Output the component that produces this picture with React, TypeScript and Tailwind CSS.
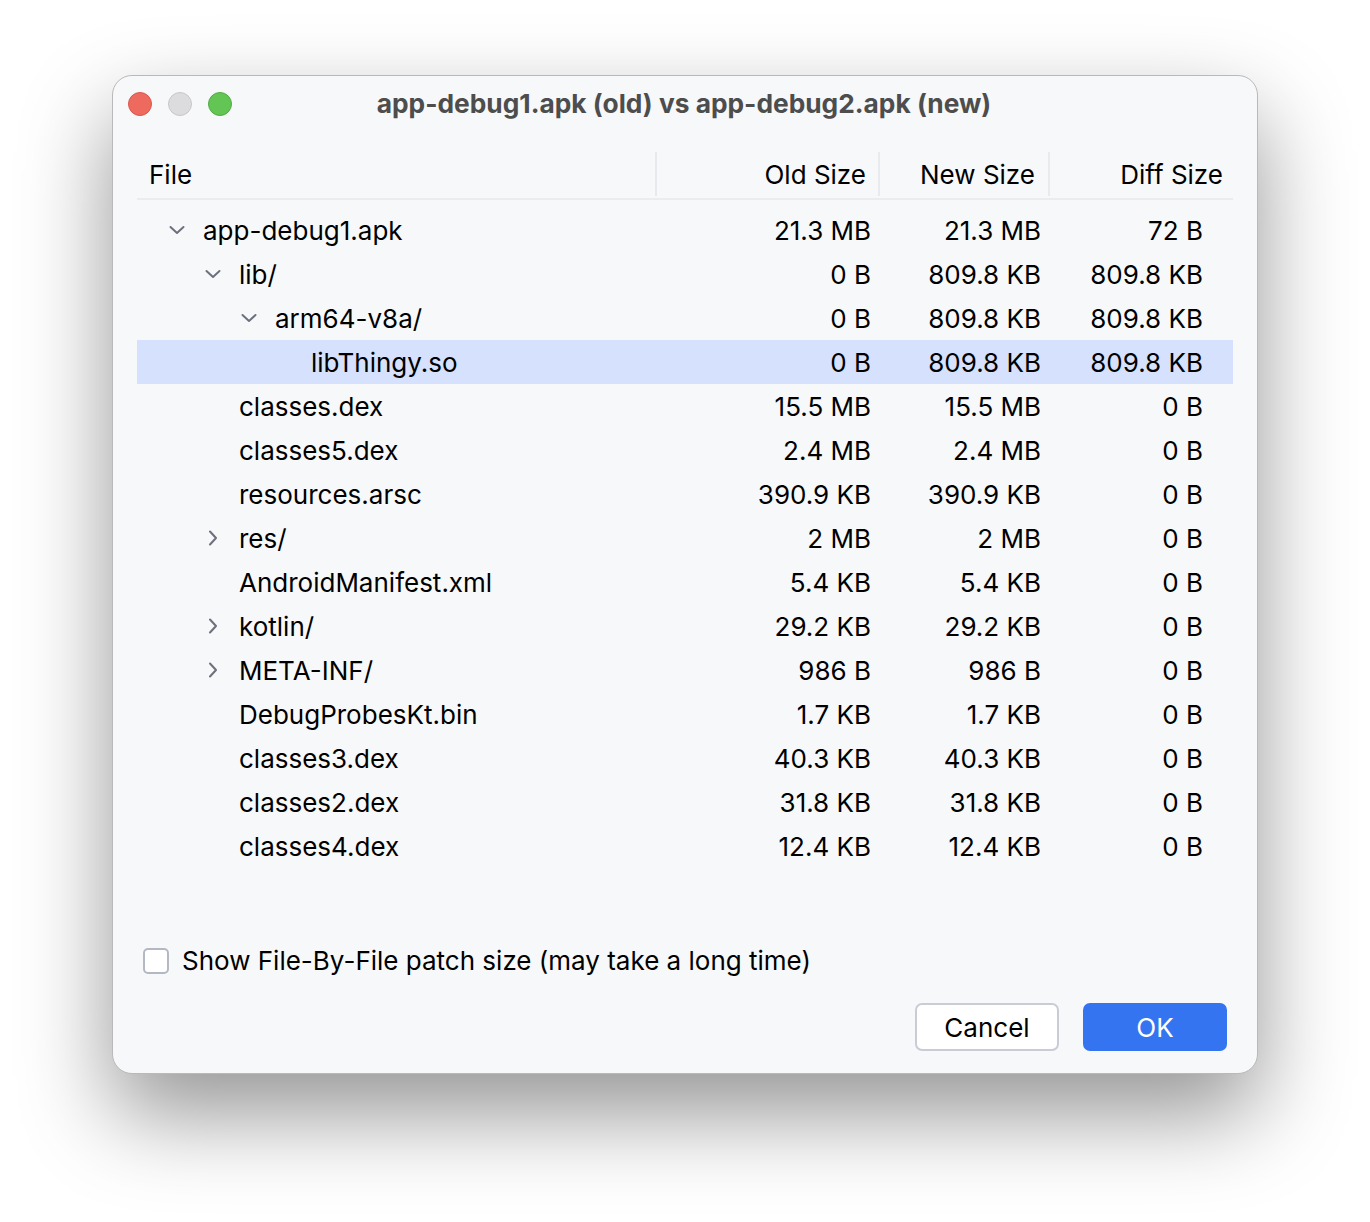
import { Fragment } from "react";

type Row = {
  name: string;
  level: number;
  chevron?: "down" | "right";
  oldSize: string;
  newSize: string;
  diffSize: string;
  selected?: boolean;
};

const rows: Row[] = [
  { name: "app-debug1.apk", level: 0, chevron: "down", oldSize: "21.3 MB", newSize: "21.3 MB", diffSize: "72 B" },
  { name: "lib/", level: 1, chevron: "down", oldSize: "0 B", newSize: "809.8 KB", diffSize: "809.8 KB" },
  { name: "arm64-v8a/", level: 2, chevron: "down", oldSize: "0 B", newSize: "809.8 KB", diffSize: "809.8 KB" },
  { name: "libThingy.so", level: 3, oldSize: "0 B", newSize: "809.8 KB", diffSize: "809.8 KB", selected: true },
  { name: "classes.dex", level: 1, oldSize: "15.5 MB", newSize: "15.5 MB", diffSize: "0 B" },
  { name: "classes5.dex", level: 1, oldSize: "2.4 MB", newSize: "2.4 MB", diffSize: "0 B" },
  { name: "resources.arsc", level: 1, oldSize: "390.9 KB", newSize: "390.9 KB", diffSize: "0 B" },
  { name: "res/", level: 1, chevron: "right", oldSize: "2 MB", newSize: "2 MB", diffSize: "0 B" },
  { name: "AndroidManifest.xml", level: 1, oldSize: "5.4 KB", newSize: "5.4 KB", diffSize: "0 B" },
  { name: "kotlin/", level: 1, chevron: "right", oldSize: "29.2 KB", newSize: "29.2 KB", diffSize: "0 B" },
  { name: "META-INF/", level: 1, chevron: "right", oldSize: "986 B", newSize: "986 B", diffSize: "0 B" },
  { name: "DebugProbesKt.bin", level: 1, oldSize: "1.7 KB", newSize: "1.7 KB", diffSize: "0 B" },
  { name: "classes3.dex", level: 1, oldSize: "40.3 KB", newSize: "40.3 KB", diffSize: "0 B" },
  { name: "classes2.dex", level: 1, oldSize: "31.8 KB", newSize: "31.8 KB", diffSize: "0 B" },
  { name: "classes4.dex", level: 1, oldSize: "12.4 KB", newSize: "12.4 KB", diffSize: "0 B" },
];

const indent = ["pl-[28px]", "pl-[64px]", "pl-[100px]", "pl-[136px]"];

function Chevron({ dir }: { dir?: "down" | "right" }) {
  if (!dir) return <span className="w-[24px] shrink-0" />;
  return (
    <span className="w-[24px] h-[24px] shrink-0 flex items-center justify-center">
      <svg width="24" height="24" viewBox="0 0 24 24" fill="none" stroke="#6c707e" strokeWidth="2" strokeLinecap="round" strokeLinejoin="round">
        {dir === "down" ? <path d="M5.5 9 L12 15 L18.5 9" /> : <path d="M9 5.5 L15 12 L9 18.5" />}
      </svg>
    </span>
  );
}

export default function App() {
  return (
    <div className="min-h-[1222px] bg-white pt-[75px] pl-[112px] font-['Inter','Noto_Sans',sans-serif]">
      <div className="w-[1146px] h-[999px] rounded-[20px] bg-[#f7f8fa] border border-[#b9b9bb] shadow-[0_40px_90px_rgba(0,0,0,0.42)] flex flex-col">
        {/* title bar */}
        <div className="relative h-[58px] flex items-center justify-center">
          <div className="absolute left-[15px] top-[16px] flex gap-[16px]">
            <span className="w-[24px] h-[24px] rounded-full bg-[#ee6a5f] border border-[#d9574d]" />
            <span className="w-[24px] h-[24px] rounded-full bg-[#dcdcde] border border-[#c8c8ca]" />
            <span className="w-[24px] h-[24px] rounded-full bg-[#62c554] border border-[#52ab45]" />
          </div>
          <span className="text-[26.3px] font-bold text-[#4d4d4d] -translate-x-[1px] -translate-y-[1px]">
            app-debug1.apk (old) vs app-debug2.apk (new)
          </span>
        </div>

        {/* table */}
        <div className="mx-[24px] mt-[18px] text-[26px] text-[#000]">
          <div className="grid grid-cols-[520px_223px_170px_185px] h-[48px] border-b-2 border-[#ebecf0]">
            <div className="flex items-center pl-[12px] border-r-2 border-[#e9eaed] mb-[2px]">File</div>
            <div className="flex items-center justify-end pr-[12px] border-r-2 border-[#e9eaed] mb-[2px]">Old Size</div>
            <div className="flex items-center justify-end pr-[13px] border-r-2 border-[#e9eaed] mb-[2px]">New Size</div>
            <div className="flex items-center justify-end pr-[12px] mb-[2px]">Diff Size</div>
          </div>
          <div className="mt-[8px] flex flex-col">
            {rows.map((r) => (
              <div
                key={r.name}
                className={`grid grid-cols-[520px_223px_170px_185px] h-[44px] items-center ${r.selected ? "bg-[#d5e1fd]" : ""}`}
              >
                <div className={`flex items-center gap-[14px] ${indent[r.level]}`}>
                  <Chevron dir={r.chevron} />
                  <span>{r.name}</span>
                </div>
                <Fragment>
                  <div className="text-right pr-[9px]">{r.oldSize}</div>
                  <div className="text-right pr-[9px]">{r.newSize}</div>
                  <div className="text-right pr-[32px]">{r.diffSize}</div>
                </Fragment>
              </div>
            ))}
          </div>
        </div>

        <div className="flex-1" />

        {/* footer */}
        <div className="px-[30px] flex items-center gap-[13px] text-[26px] text-black">
          <span className="w-[26px] h-[26px] rounded-[5px] bg-white border-2 border-[#b4b8c4]" />
          <span>Show File-By-File patch size (may take a long time)</span>
        </div>
        <div className="flex justify-end gap-[24px] pr-[30px] mt-[23px] mb-[22px]">
          <button className="w-[144px] h-[48px] rounded-[7px] bg-white border-2 border-[#c9ccd6] text-[26px] text-black">
            Cancel
          </button>
          <button className="w-[144px] h-[48px] rounded-[7px] bg-[#3574f0] text-[26px] text-white">
            OK
          </button>
        </div>
      </div>
    </div>
  );
}
